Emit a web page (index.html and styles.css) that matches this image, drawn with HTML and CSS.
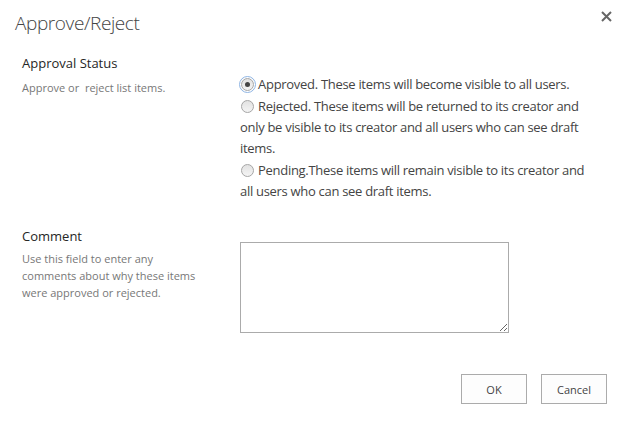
FILE: index.html
```html
<!DOCTYPE html>
<html lang="en">
<head>
  <meta charset="UTF-8" />
  <title>Approve/Reject</title>
  <link rel="stylesheet" href="styles.css">
</head>
<body>
  <div class="dialog">
    <div class="dialog-header">
      <h1 class="dialog-title">Approve/Reject</h1>
      <button class="close-btn" title="Close">
        <svg width="11" height="11" viewBox="0 0 11 11">
          <path d="M1 1 L10 10 M10 1 L1 10" stroke="#666" stroke-width="2" fill="none"/>
        </svg>
      </button>
    </div>

    <div class="form-row status-row">
      <div class="label-col">
        <h3 class="field-title">Approval Status</h3>
        <p class="field-desc">Approve or&nbsp; reject list items.</p>
      </div>
      <div class="input-col">
        <label class="radio-item">
          <input type="radio" name="status" class="radio focused" checked>
          Approved. These items will become visible to all users.
        </label>
        <label class="radio-item">
          <input type="radio" name="status" class="radio">
          Rejected. These items will be returned to its creator and only be visible to its creator and all users who can see draft items.
        </label>
        <label class="radio-item">
          <input type="radio" name="status" class="radio">
          Pending.These items will remain visible to its creator and all users who can see draft items.
        </label>
      </div>
    </div>

    <div class="form-row comment-row">
      <div class="label-col">
        <h3 class="field-title">Comment</h3>
        <p class="field-desc">Use this field to enter any comments about why these items were approved or rejected.</p>
      </div>
      <div class="input-col">
        <textarea class="comment-box"></textarea>
      </div>
    </div>

    <div class="button-row">
      <button class="btn">OK</button>
      <button class="btn">Cancel</button>
    </div>
  </div>
</body>
</html>
```

FILE: styles.css
```css
body {
  margin: 0;
  background: #fff;
  font-family: "Open Sans", "Noto Sans", sans-serif;
  color: #444;
}

.dialog {
  width: 623px;
  height: 427px;
  box-sizing: border-box;
  padding: 8px 0 0 0;
}

.dialog-header {
  display: flex;
  justify-content: space-between;
  align-items: flex-start;
  padding: 0 10px 0 15px;
}

.dialog-title {
  margin: 0;
  font-size: 19px;
  font-weight: 300;
  letter-spacing: -0.4px;
  color: #444;
  line-height: 30px;
}

.close-btn {
  border: none;
  background: none;
  padding: 0;
  margin-top: 2px;
  width: 14px;
  height: 14px;
  cursor: pointer;
}

.form-row {
  display: flex;
  padding-left: 22px;
}

.status-row {
  margin-top: 16px;
}

.comment-row {
  margin-top: 25px;
}

.label-col {
  width: 218px;
  flex-shrink: 0;
}

.input-col {
  width: 345px;
}

.field-title {
  margin: 0;
  font-size: 13px;
  font-weight: 400;
  color: #262626;
  line-height: 18px;
}

.field-desc {
  margin: 7px 0 0 0;
  font-size: 11px;
  color: #777;
  line-height: 17px;
  width: 180px;
}

.status-row .input-col {
  margin-top: 20px;
}

.radio-item {
  display: block;
  font-size: 13px;
  letter-spacing: -0.3px;
  line-height: 21px;
  color: #444;
}

.radio-item + .radio-item {
  margin-top: 1px;
}

.radio {
  appearance: none;
  -webkit-appearance: none;
  width: 13px;
  height: 13px;
  margin: 0 1px 0 1px;
  border: 1px solid #a6a6a6;
  border-radius: 50%;
  background: linear-gradient(#e2e2e2, #f4f4f4);
  box-sizing: border-box;
  vertical-align: -2px;
  position: relative;
}

.radio:checked::after {
  content: "";
  position: absolute;
  left: 3px;
  top: 3px;
  width: 5px;
  height: 5px;
  border-radius: 50%;
  background: #444;
}

.radio.focused {
  outline: 1px solid #8eb4e3;
  outline-offset: 1px;
}

.comment-row .field-desc {
  margin-top: 5px;
}

.comment-box {
  display: block;
  margin-top: 15px;
  width: 269px;
  height: 91px;
  box-sizing: border-box;
  border: 1px solid #ababab;
  resize: both;
  font-family: inherit;
}

.button-row {
  display: flex;
  justify-content: flex-end;
  gap: 14px;
  padding-right: 16px;
  margin-top: 41px;
}

.btn {
  width: 66px;
  height: 30px;
  border: 1px solid #ababab;
  background: #fdfdfd;
  font-family: inherit;
  font-size: 11px;
  color: #444;
}
```
